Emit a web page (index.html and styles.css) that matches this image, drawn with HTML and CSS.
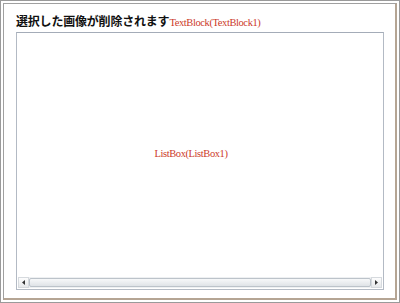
FILE: index.html
```html
<!DOCTYPE html>
<html lang="ja">
  <head>
    <meta charset="UTF-8" />
    <title>ListBox</title>
    <link rel="stylesheet" href="styles.css">
  </head>
  <body>
    <div class="window">
      <div class="inner">
        <div class="header">
          <span class="title">選択した画像が削除されます</span>
          <span class="label">TextBlock(TextBlock1)</span>
        </div>
        <div class="listbox">
          <div class="list-area">
            <span class="label">ListBox(ListBox1)</span>
          </div>
          <div class="hscroll">
            <div class="arrow">
              <svg width="4" height="5" viewBox="0 0 4 5"><path d="M3 0 L0 2.5 L3 5 Z" fill="#333"/></svg>
            </div>
            <div class="track"><div class="thumb"></div></div>
            <div class="arrow">
              <svg width="4" height="5" viewBox="0 0 4 5"><path d="M0 0 L3 2.5 L0 5 Z" fill="#333"/></svg>
            </div>
          </div>
        </div>
      </div>
    </div>
  </body>
</html>
```

FILE: styles.css
```css
* {
  margin: 0;
  padding: 0;
  box-sizing: border-box;
}

body {
  width: 400px;
  height: 303px;
  background-color: #ffffff;
  overflow: hidden;
}

.window {
  width: 400px;
  height: 303px;
  border: 1px solid #9a9a9a;
  padding: 2px;
  background-color: #ffffff;
}

.inner {
  height: 100%;
  border-top: 1px solid #a0a0a0;
  border-left: 1px solid #a0a0a0;
  border-right: 2px solid #b5a594;
  border-bottom: 2px solid #b5a594;
  padding: 6px 11px 8px 12px;
  display: flex;
  flex-direction: column;
}

.header {
  height: 22px;
  display: flex;
  align-items: baseline;
  padding-top: 3px;
}

.title {
  font-family: "Noto Sans CJK JP", sans-serif;
  font-size: 12px;
  font-weight: bold;
  letter-spacing: -0.2px;
  color: #111111;
  line-height: 16px;
}

.label {
  font-family: "Liberation Serif", serif;
  font-size: 10.5px;
  letter-spacing: -0.4px;
  color: #cc3a2a;
}

.listbox {
  flex: 1;
  border: 1px solid #b3bac4;
  border-top-color: #a4acb8;
  display: flex;
  flex-direction: column;
  padding: 1px;
}

.list-area {
  flex: 1;
  display: flex;
  justify-content: center;
  align-items: center;
  padding-bottom: 4px;
  padding-right: 18px;
}

.hscroll {
  height: 11px;
  display: flex;
  background-color: #eef0f2;
}

.arrow {
  width: 11px;
  display: flex;
  align-items: center;
  justify-content: center;
  background: linear-gradient(#fdfdfd, #e6e8ea);
  border: 1px solid #d6dade;
}

.track {
  flex: 1;
  padding: 1px 0;
}

.thumb {
  height: 100%;
  border: 1px solid #bcc3ca;
  border-radius: 2px;
  background: linear-gradient(#f7f8f9, #dfe3e7);
}
```
